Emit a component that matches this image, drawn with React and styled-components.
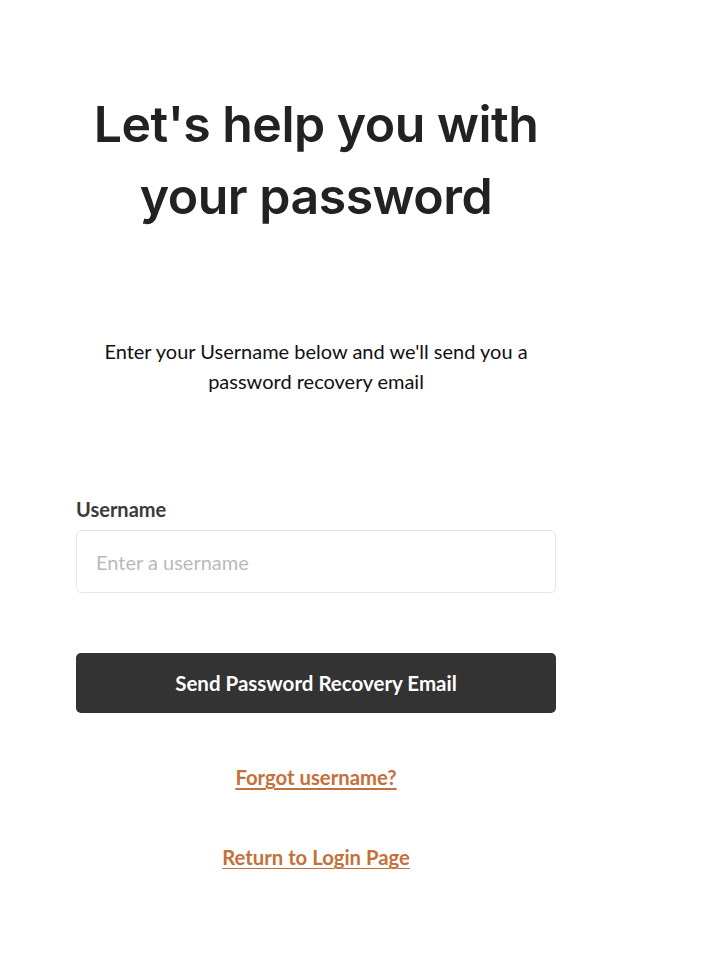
import React from 'react';
import styled, {createGlobalStyle} from "styled-components";

const GlobalStyle = createGlobalStyle`
body{
margin: 0;
background: #ffffff;
font-family: Lato, "Liberation Sans", sans-serif;
}
`;

const Page = styled.main`
width: 480px;
margin-left: 76px;
padding-top: 88px;
display: flex;
flex-flow: column;
align-items: stretch;
`;
const Heading = styled.h1`
margin: 0;
font-family: Inter, "Liberation Sans", sans-serif;
font-weight: 600;
font-size: 50px;
line-height: 72px;
letter-spacing: -0.5px;
text-align: center;
color: #222222;
`;
const Intro = styled.p`
margin: 104px 0 0;
font-size: 20px;
line-height: 30px;
text-align: center;
color: #111111;
`;
const Form = styled.form`
margin-top: 101px;
display: flex;
flex-flow: column;
`;
const Label = styled.label`
font-size: 20px;
font-weight: 700;
line-height: 24px;
color: #3a3a3a;
margin-bottom: 9px;
`;
const Input = styled.input`
box-sizing: border-box;
height: 63px;
width: 100%;
padding: 0 19px;
border: 1px solid #e6e6ea;
border-radius: 5px;
font-family: inherit;
font-size: 20px;
color: #222;
outline: none;
&::placeholder{
color: #b9b9bd;
}
`;
const Button = styled.button`
margin-top: 60px;
height: 60px;
width: 100%;
border: none;
border-radius: 5px;
background: #333333;
color: #ffffff;
font-family: inherit;
font-size: 20.5px;
font-weight: 700;
cursor: pointer;
`;
const LinkText = styled.a`
align-self: center;
margin-top: ${props => props.gap};
font-size: 20.3px;
font-weight: 700;
line-height: 24px;
color: #c4703a;
text-decoration: underline;
text-decoration-color: #c4703a;
text-decoration-thickness: 2px;
text-underline-offset: 3px;
cursor: pointer;
`;

const App = () => {
    return (
        <>
            <GlobalStyle/>
            <Page>
                <Heading>Let's help you with<br/>your password</Heading>
                <Intro>Enter your Username below and we'll send you a<br/>password recovery email</Intro>
                <Form onSubmit={e => e.preventDefault()}>
                    <Label htmlFor="username">Username</Label>
                    <Input id="username" type="text" placeholder="Enter a username"/>
                    <Button type="submit">Send Password Recovery Email</Button>
                </Form>
                <LinkText gap="52px">Forgot username?</LinkText>
                <LinkText gap="56px">Return to Login Page</LinkText>
            </Page>
        </>
    )
};

export default App
